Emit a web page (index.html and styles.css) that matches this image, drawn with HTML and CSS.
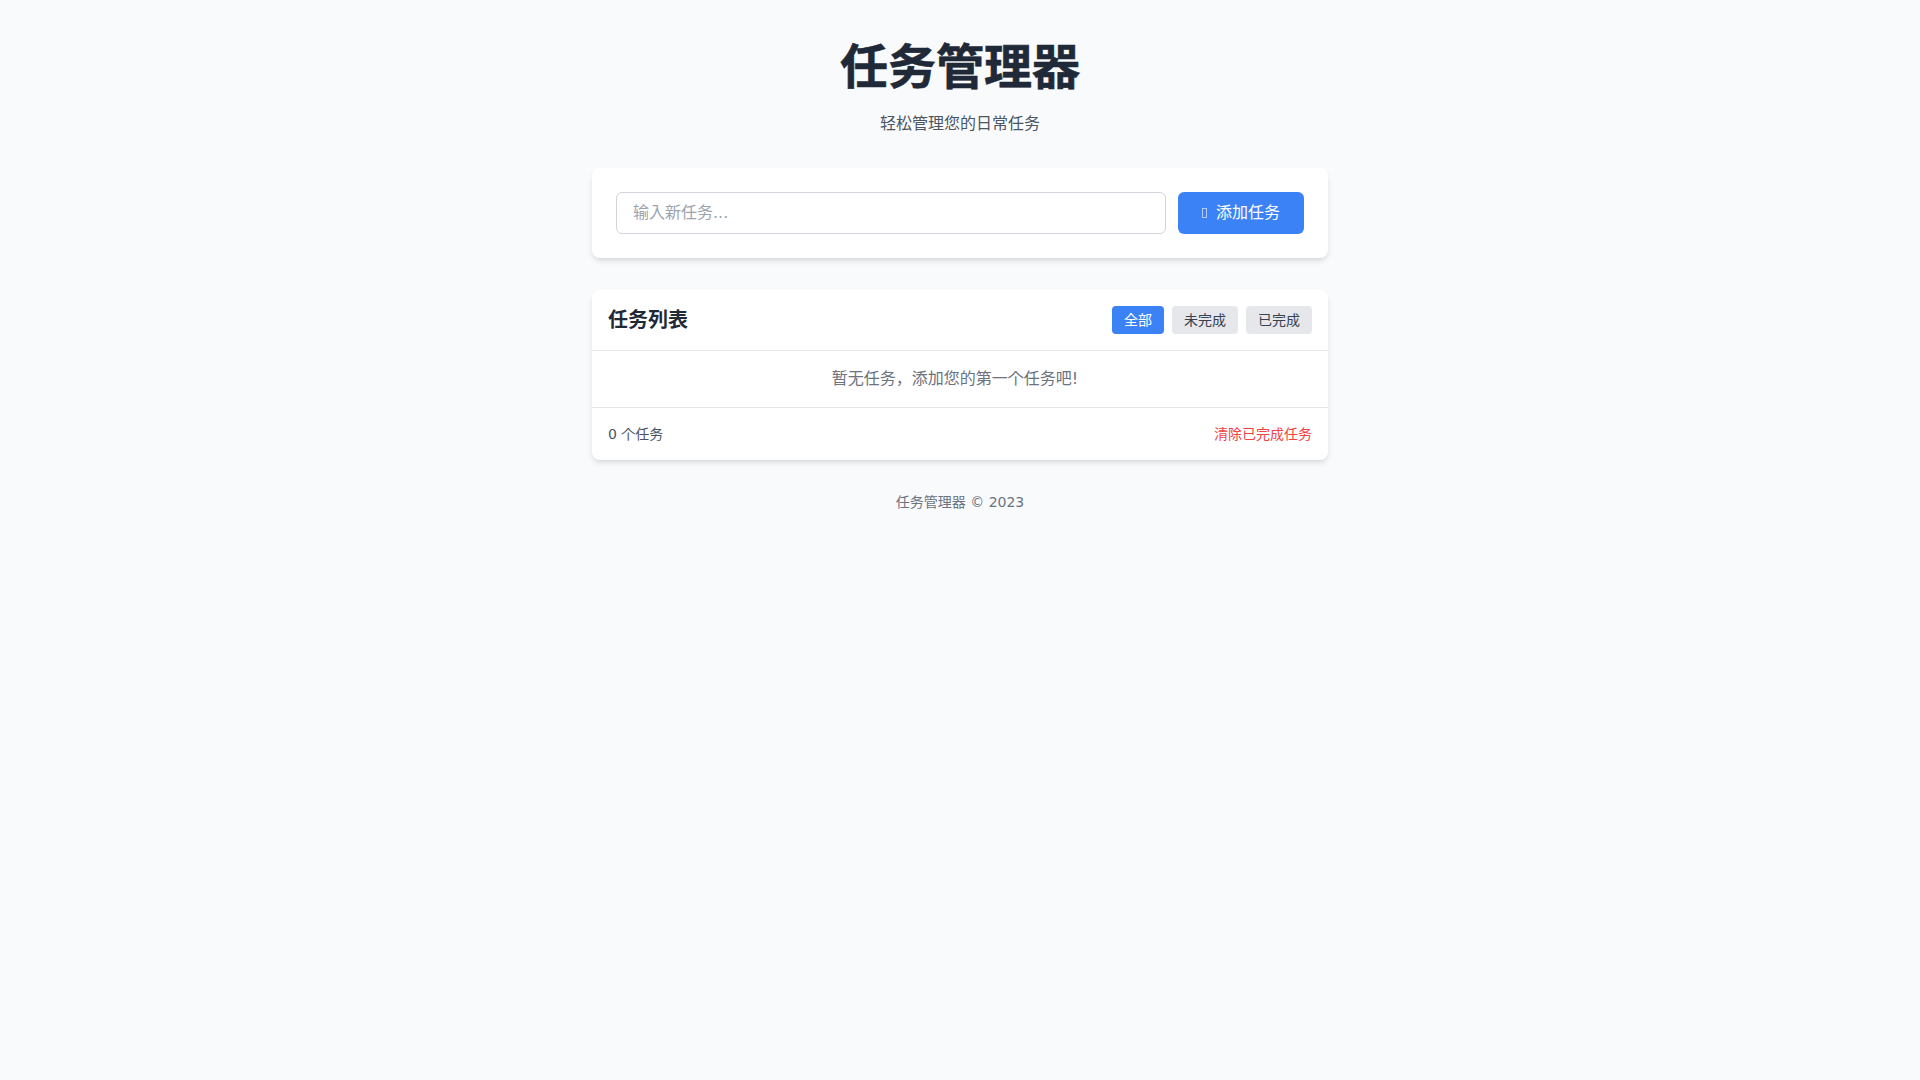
FILE: index.html
```html
<!DOCTYPE html>
<html lang="en">
<head>
    <meta charset="UTF-8">
    <meta name="viewport" content="width=device-width, initial-scale=1.0">
    <title>任务管理器</title>
    <link rel="stylesheet" href="styles.css">
</head>
<body>
    <div id="app">
        <header class="page-header">
            <h1>任务管理器</h1>
            <p>轻松管理您的日常任务</p>
        </header>

        <div class="card add-card">
            <input type="text" class="task-input" placeholder="输入新任务...">
            <button class="add-button"><i class="icon"></i>添加任务</button>
        </div>

        <div class="card list-card">
            <div class="list-header">
                <h2>任务列表</h2>
                <div class="filters">
                    <button class="filter active">全部</button>
                    <button class="filter">未完成</button>
                    <button class="filter">已完成</button>
                </div>
            </div>
            <div class="empty">暂无任务，添加您的第一个任务吧!</div>
            <div class="list-footer">
                <span class="count">0 个任务</span>
                <button class="clear">清除已完成任务</button>
            </div>
        </div>

        <footer class="page-footer">任务管理器 © 2023</footer>
    </div>
</body>
</html>
```

FILE: styles.css
```css
* {
    box-sizing: border-box;
}
body {
    margin: 0;
    min-height: 100vh;
    background-color: #f9fafb;
    color: #1f2937;
    font-family: "DejaVu Sans", "Noto Sans CJK JP", sans-serif;
    font-size: 16px;
    line-height: 24px;
}
button, input {
    font-family: inherit;
    margin: 0;
}
#app {
    max-width: 768px;
    margin: 0 auto;
    padding: 32px 16px;
}
.page-header {
    text-align: center;
    margin-bottom: 32px;
}
.page-header h1 {
    margin: -1px 0 9px;
    font-size: 48px;
    line-height: 72px;
    font-weight: 700;
    -webkit-text-stroke: 0.6px #1f2937;
    color: #1f2937;
}
.page-header p {
    margin: 0;
    color: #4b5563;
}
.card {
    background-color: white;
    border-radius: 8px;
    box-shadow: 0 4px 6px -1px rgba(0,0,0,0.1), 0 2px 4px -1px rgba(0,0,0,0.06);
}
.add-card {
    display: flex;
    gap: 12px;
    padding: 24px;
    margin-bottom: 32px;
}
.task-input {
    flex: 1;
    min-width: 0;
    height: 42px;
    padding: 7px 16px 9px;
    border: 1px solid #d1d5db;
    border-radius: 6px;
    font-size: 16px;
    color: #1f2937;
}
.task-input::placeholder {
    color: #9ca3af;
}
.add-button {
    padding: 8px 24px;
    border: none;
    border-radius: 6px;
    background-color: #3b82f6;
    color: white;
    font-size: 16px;
    line-height: 24px;
    cursor: pointer;
}
.icon {
    display: inline-block;
    width: 5px;
    height: 10px;
    margin-right: 9px;
    border: 1px solid rgba(255,255,255,0.6);
}
.list-card {
    overflow: hidden;
}
.list-header {
    display: flex;
    justify-content: space-between;
    align-items: center;
    padding: 16px;
    border-bottom: 1px solid #e5e7eb;
}
.list-header h2 {
    margin: 0;
    font-size: 20px;
    line-height: 28px;
    font-weight: 600;
    color: #1f2937;
}
.filters {
    display: flex;
    gap: 8px;
}
.filter {
    padding: 4px 12px;
    border: none;
    border-radius: 4px;
    background-color: #e5e7eb;
    color: #374151;
    font-size: 14px;
    line-height: 20px;
    cursor: pointer;
}
.filter.active {
    background-color: #3b82f6;
    color: white;
}
.empty {
    padding: 16px 26px 16px 16px;
    text-align: center;
    color: #6b7280;
}
.list-footer {
    display: flex;
    justify-content: space-between;
    align-items: center;
    padding: 16px;
    border-top: 1px solid #e5e7eb;
    font-size: 14px;
    line-height: 20px;
}
.count {
    color: #4b5563;
}
.clear {
    padding: 0;
    border: none;
    background: none;
    color: #ef4444;
    font-size: 14px;
    line-height: 20px;
    cursor: pointer;
}
.page-footer {
    margin-top: 32px;
    text-align: center;
    color: #6b7280;
    font-size: 14px;
    line-height: 20px;
}
```
